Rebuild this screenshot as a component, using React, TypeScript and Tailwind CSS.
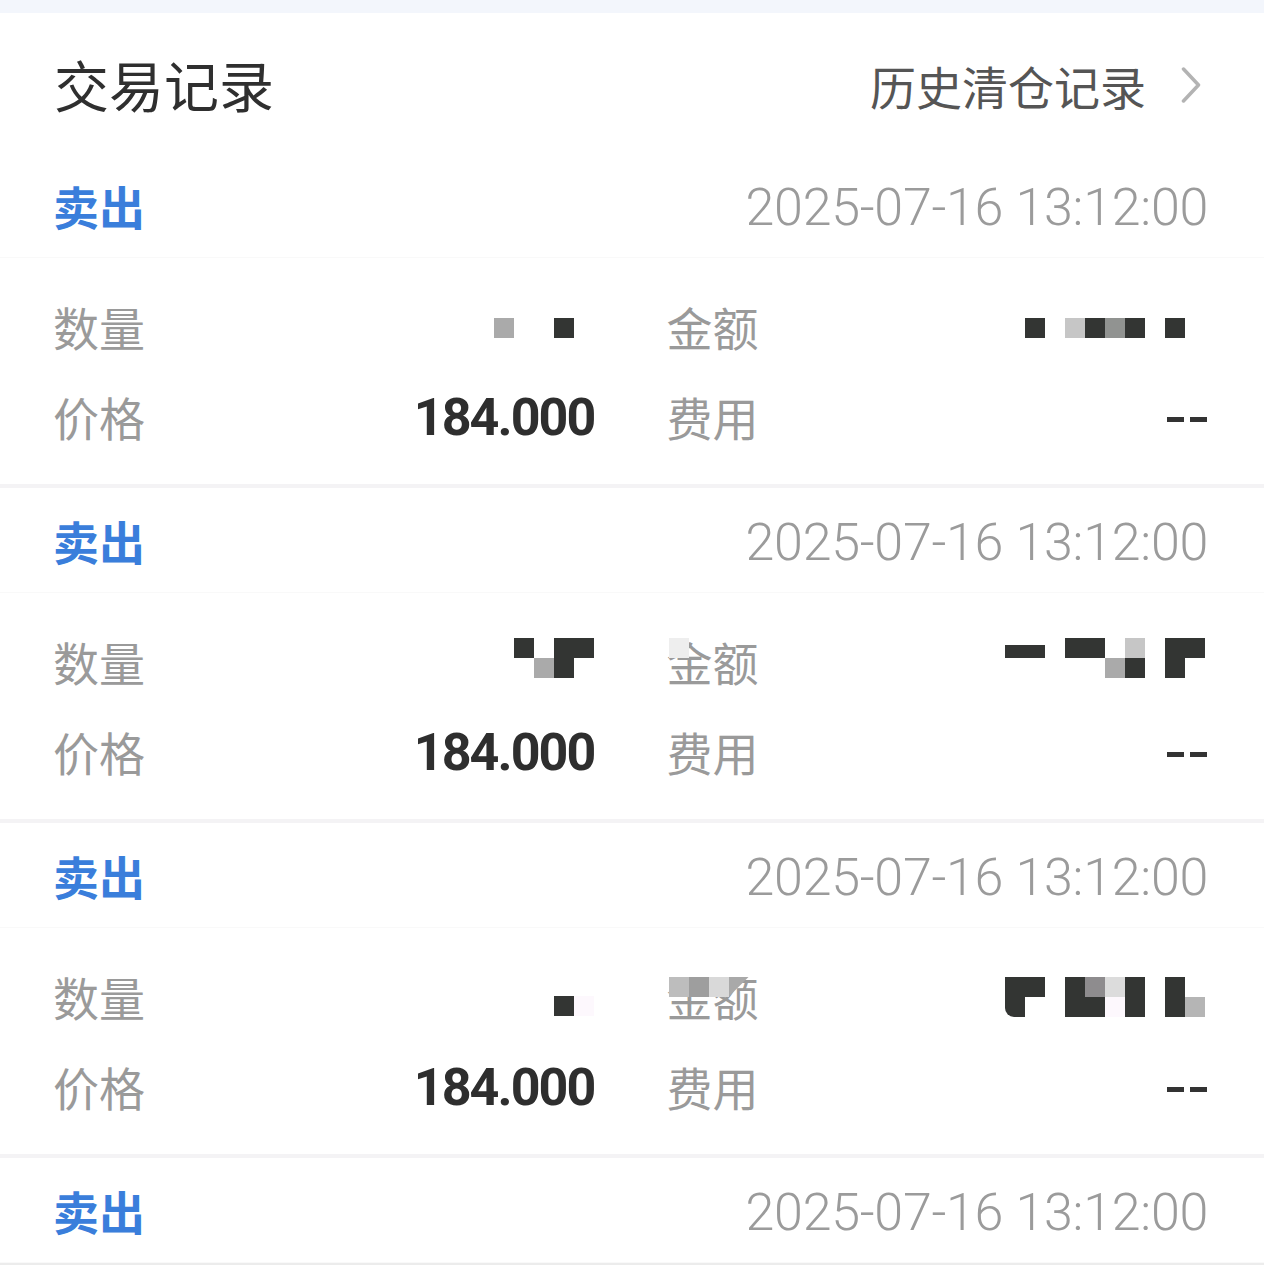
import React from "react";

const CELL: Record<string, string> = {
  d: "w-[20px] h-[20px] bg-[#333533]",
  g: "w-[20px] h-[20px] bg-[#aaaaaa]",
  l: "w-[20px] h-[20px] bg-[#c6c6c6]",
  m: "w-[20px] h-[20px] bg-[#919391]",
  n: "w-[20px] h-[20px] bg-[#8e8c8e]",
  k: "w-[20px] h-[20px] bg-[#dcdcdc]",
  f: "w-[20px] h-[20px] bg-[#fdf8fd]",
  b: "w-[20px] h-[20px] bg-[#b5b5b5]",
  p: "w-[20px] h-[13px] self-end bg-[#333533]",
  r: "w-[20px] h-[20px] bg-[#333533] rounded-bl-[9px]",
  ".": "w-[20px] h-[20px]",
};

function Mosaic({ rows, className = "" }: { rows: string[]; className?: string }) {
  return (
    <div className={`flex flex-col ${className}`}>
      {rows.map((row, i) => (
        <div key={i} className="flex h-[20px] items-end">
          {row.split("").map((c, j) => (
            <div key={j} className={CELL[c]} />
          ))}
        </div>
      ))}
    </div>
  );
}

const cjk = "font-['Noto_Sans_CJK_SC','Noto_Sans',sans-serif]";
const num = "font-['Roboto','Liberation_Sans',sans-serif]";

type Card = {
  qty: React.ReactNode;
  amt: React.ReactNode;
  overlay?: React.ReactNode;
};

function Label({ children, overlay }: { children: React.ReactNode; overlay?: React.ReactNode }) {
  return (
    <span className={`relative inline-block text-[46px] leading-none text-[#9a9a9a] ${cjk}`}>
      {children}
      {overlay}
    </span>
  );
}

function Row({
  label,
  value,
  overlay,
}: {
  label: string;
  value: React.ReactNode;
  overlay?: React.ReactNode;
}) {
  return (
    <div className="flex h-[90px] items-center justify-between">
      <Label overlay={overlay}>{label}</Label>
      {value}
    </div>
  );
}

function TradeCard({ card, showDetails = true }: { card: Card; showDetails?: boolean }) {
  return (
    <div className="bg-white">
      <div className="flex h-[105px] items-center justify-between border-b border-[#f9f9f9] pl-[53px] pr-[56px]">
        <span className={`text-[46px] font-bold leading-none text-[#3a7edb] ${cjk}`}>卖出</span>
        <span className={`pt-[6px] text-[52px] font-light leading-none tracking-[-0.3px] text-[#9b9b9b] ${num}`}>
          2025-07-16 13:12:00
        </span>
      </div>
      {showDetails && (
        <div className="grid grid-cols-2 gap-x-[72px] py-[23px] pl-[53px] pr-[56px]">
          <div className="flex flex-col">
            <Row label="数量" value={card.qty} />
            <Row
              label="价格"
              value={
                <span className={`pt-[4px] text-[52px] font-bold leading-none tracking-[-1.9px] text-[#2e2e2e] ${num}`}>
                  184.000
                </span>
              }
            />
          </div>
          <div className="flex flex-col">
            <Row label="金额" value={card.amt} overlay={card.overlay} />
            <Row
              label="费用"
              value={
                <span className="flex gap-[6px] pr-[1px] pt-[6px]">
                  <span className="h-[5px] w-[17px] bg-[#333333]" />
                  <span className="h-[5px] w-[17px] bg-[#333333]" />
                </span>
              }
            />
          </div>
        </div>
      )}
    </div>
  );
}

const cards: Card[] = [
  {
    qty: <Mosaic rows={["g..d."]} className="mr-[1px] mt-[3px]" />,
    amt: <Mosaic rows={["d.ldmd.d."]} className="mr-[3px] mt-[3px]" />,
  },
  {
    qty: <Mosaic rows={["d.dd", ".gd."]} className="mb-[6px] mr-[1px]" />,
    amt: <Mosaic rows={["pp.dd.l.dd", ".....gd.d."]} className="mb-[6px] mr-[3px]" />,
    overlay: <span className="absolute left-[2px] top-[0px] h-[20px] w-[20px] bg-[#eeeeee]" />,
  },
  {
    qty: <Mosaic rows={["df"]} className="mr-[1px] mt-[20px]" />,
    amt: <Mosaic rows={["dd.dnkd.d.", "r..ddfd.db"]} className="mr-[3px] mt-[2px]" />,
    overlay: (
      <span className="absolute left-[2px] top-[4px] flex">
        <span className="h-[20px] w-[20px] bg-[#bdbdbd]" />
        <span className="h-[20px] w-[20px] bg-[#9e9e9e]" />
        <span className="h-[20px] w-[20px] bg-[#d9d9d9]" />
        <span className="h-[20px] w-[20px] bg-[#a9a9a9] [clip-path:polygon(0_0,100%_0,0_100%)]" />
      </span>
    ),
  },
];

export default function App() {
  return (
    <div className="h-[1271px] w-full overflow-hidden bg-white">
      <div className="h-[13px] bg-[#f3f6fc]" />
      <div className="flex h-[140px] items-center justify-between pl-[54px] pr-[63px]">
        <span className={`text-[55px] leading-none text-[#2f2f2f] ${cjk}`}>交易记录</span>
        <div className="flex items-center gap-[35px] pt-[4px]">
          <span className={`text-[46px] leading-none text-[#555555] ${cjk}`}>历史清仓记录</span>
          <svg width="20" height="36" viewBox="0 0 20 36" fill="none">
            <path d="M2.5 2 L17.5 18 L2.5 34" stroke="#b3b3b3" strokeWidth="3.5" strokeLinecap="round" strokeLinejoin="round" />
          </svg>
        </div>
      </div>
      {cards.map((c, i) => (
        <React.Fragment key={i}>
          <TradeCard card={c} />
          <div className="h-[4px] bg-[#f4f3f5]" />
        </React.Fragment>
      ))}
      <div className="border-b-2 border-[#ececec]">
        <TradeCard card={cards[0]} showDetails={false} />
      </div>
    </div>
  );
}
